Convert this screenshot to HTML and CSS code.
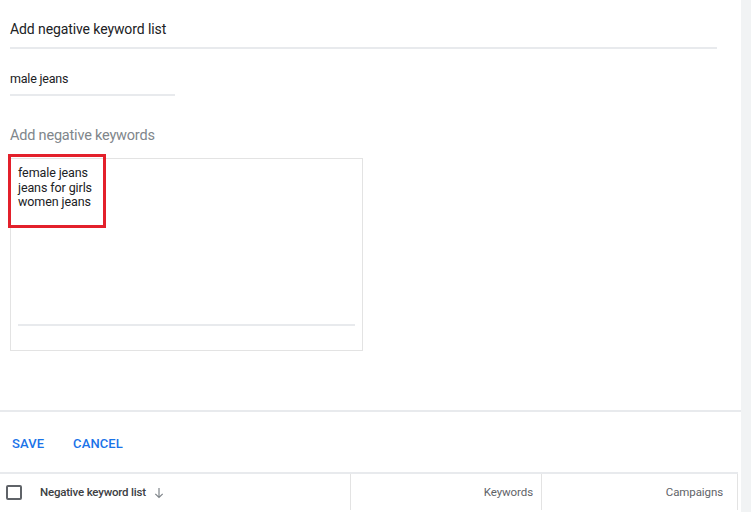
FILE: index.html
```html
<!DOCTYPE html>
<html>
<head>
<meta charset="utf-8">
<link rel="stylesheet" href="styles.css">
</head>
<body>
<div class="page">
  <div class="main">
    <div class="form">
      <div class="title">Add negative keyword list</div>
      <div class="divider"></div>
      <div class="name-field">male jeans</div>
      <div class="label">Add negative keywords</div>
      <div class="kw-box">
        <div class="kw-text">
          <div>female jeans</div>
          <div>jeans for girls</div>
          <div>women jeans</div>
        </div>
        <div class="kw-line"></div>
        <div class="highlight"></div>
      </div>
    </div>
    <div class="actions">
      <span class="btn">SAVE</span>
      <span class="btn">CANCEL</span>
    </div>
    <div class="table-head">
      <div class="col col-name">
        <span class="checkbox"></span>
        <span class="name-label">Negative keyword list</span>
        <svg class="sort" width="10" height="12" viewBox="0 0 10 12"><path d="M5 1v9.5M1.3 6.8L5 10.5l3.7-3.7" fill="none" stroke="#80868b" stroke-width="1.2"/></svg>
      </div>
      <div class="col col-num">Keywords</div>
      <div class="col col-num col-last">Campaigns</div>
    </div>
  </div>
  <div class="scroll"></div>
</div>
</body>
</html>
```

FILE: styles.css
```css
* { box-sizing: border-box; }
html, body { margin: 0; padding: 0; background: #fff; }
body { font-family: Roboto, "Liberation Sans", Arial, sans-serif; color: #202124; }

.page { display: flex; width: 751px; height: 518px; }
.main { width: 741px; height: 510px; display: flex; flex-direction: column; }
.scroll { width: 10px; height: 512px; background: #f1f3f4; }

.form { padding-left: 10px; height: 410px; }
.title { font-size: 14px; line-height: 18px; padding-top: 20px; color: #202124; letter-spacing: -0.1px; }
.divider { width: 707px; height: 2px; background: #e8eaed; margin-top: 9px; }
.name-field { width: 165px; font-size: 12.5px; line-height: 16px; padding-top: 22px; padding-bottom: 7px; border-bottom: 2px solid #e8eaed; color: #202124; letter-spacing: -0.2px; }
.label { font-size: 14.5px; line-height: 18px; margin-top: 31px; color: #80868b; letter-spacing: -0.2px; }
.kw-box { position: relative; width: 353px; height: 193px; margin-top: 13px; border: 1px solid #e3e3e3; padding: 7px 7px 0 7px; }
.kw-text { font-size: 12.5px; line-height: 14.7px; height: 158px; color: #202124; letter-spacing: -0.1px; }
.kw-line { height: 2px; background: #e8eaed; }
.highlight { position: absolute; left: -3px; top: -5px; width: 98px; height: 74px; border: 3px solid #e3202b; }

.actions { height: 62px; border-top: 2px solid #e8eaed; display: flex; align-items: center; gap: 29px; padding-left: 12px; padding-top: 2px; }
.btn { color: #1a73e8; font-size: 13px; font-weight: 500; letter-spacing: 0.1px; }

.table-head { display: flex; height: 38px; border-top: 2px solid #e8eaed; width: 738px; }
.col { display: flex; align-items: center; font-size: 11.5px; }
.col-name { width: 350px; padding-left: 6px; }
.checkbox { width: 16px; height: 15px; border: 2px solid #5f6368; border-radius: 2px; }
.name-label { margin-left: 18px; font-weight: 500; color: #3c4043; letter-spacing: -0.2px; }
.sort { margin-left: 8px; margin-top: 2px; }
.col-num { border-left: 1px solid #e3e3e3; justify-content: flex-end; color: #5f6368; padding-right: 8px; letter-spacing: -0.1px; }
.col-num:nth-child(2) { width: 191px; }
.col-last { width: 197px; border-right: 1px solid #e3e3e3; padding-right: 14px; }
```
